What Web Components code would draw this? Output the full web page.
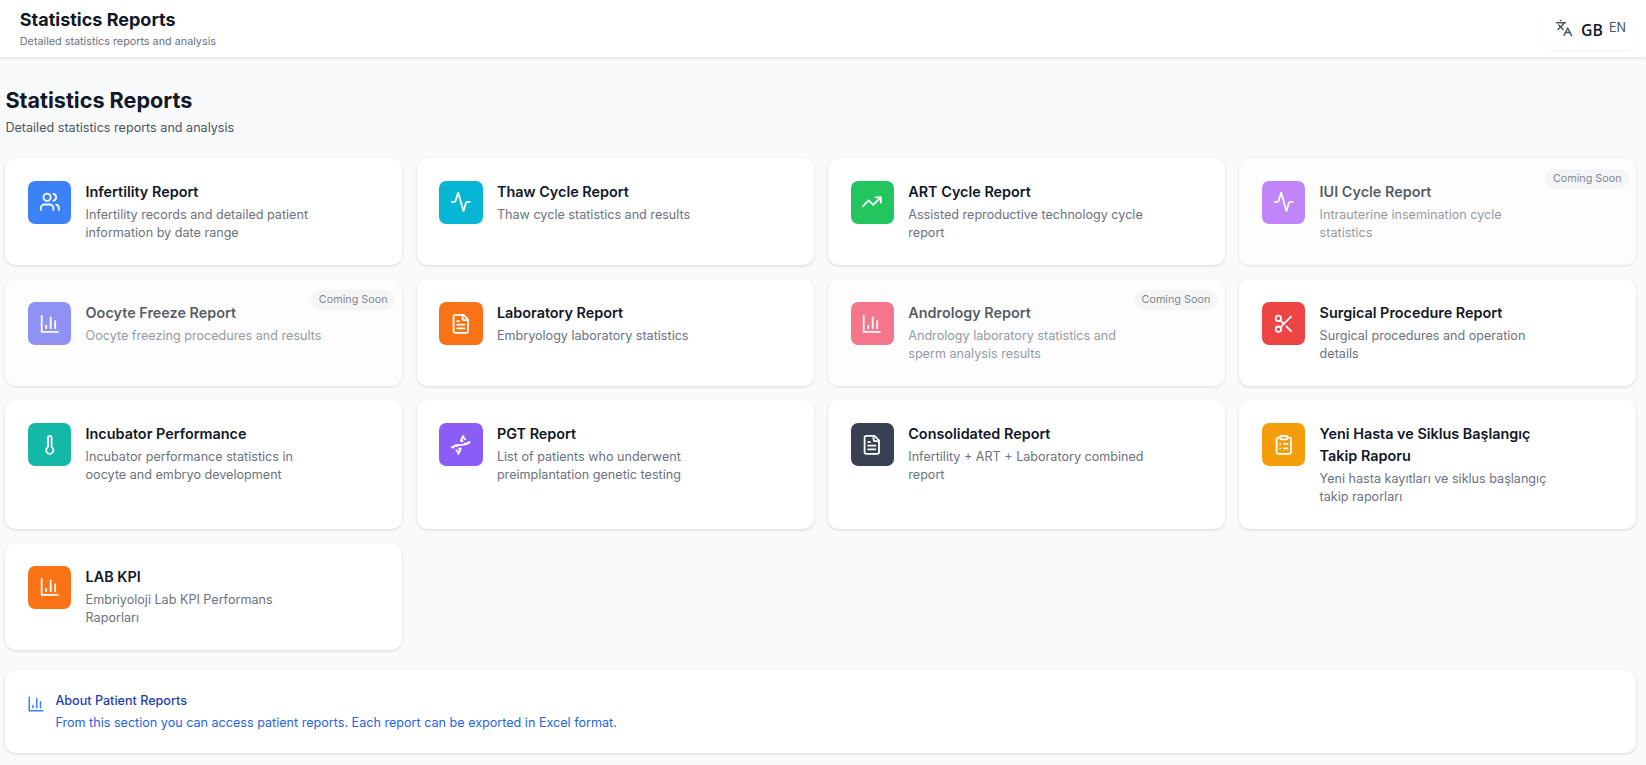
<!DOCTYPE html>
<html lang="en">
<head>
<meta charset="utf-8">
<title>Statistics Reports</title>
<style>
  html, body { margin: 0; padding: 0; background: #f9fafb; }
  body { font-family: Inter, "Noto Sans", sans-serif; color: #111827; }
</style>
</head>
<body>
<app-header>
  <span slot="title">Statistics Reports</span>
  <span slot="subtitle">Detailed statistics reports and analysis</span>
</app-header>
<report-page>
  <span slot="title">Statistics Reports</span>
  <span slot="subtitle">Detailed statistics reports and analysis</span>
  <report-card color="#3b82f6" icon="users"><span slot="title">Infertility Report</span>Infertility records and detailed patient information by date range</report-card>
  <report-card color="#06b6d4" icon="activity"><span slot="title">Thaw Cycle Report</span>Thaw cycle statistics and results</report-card>
  <report-card color="#22c55e" icon="trending"><span slot="title">ART Cycle Report</span>Assisted reproductive technology cycle report</report-card>
  <report-card color="#a855f7" icon="activity" soon><span slot="title">IUI Cycle Report</span>Intrauterine insemination cycle statistics</report-card>
  <report-card color="#6366f1" icon="chart" soon><span slot="title">Oocyte Freeze Report</span>Oocyte freezing procedures and results</report-card>
  <report-card color="#f97316" icon="file"><span slot="title">Laboratory Report</span>Embryology laboratory statistics</report-card>
  <report-card color="#f43f5e" icon="chart" soon><span slot="title">Andrology Report</span>Andrology laboratory statistics and sperm analysis results</report-card>
  <report-card color="#ef4444" icon="scissors"><span slot="title">Surgical Procedure Report</span>Surgical procedures and operation details</report-card>
  <report-card color="#14b8a6" icon="thermometer"><span slot="title">Incubator Performance</span>Incubator performance statistics in oocyte and embryo development</report-card>
  <report-card color="#8b5cf6" icon="dna"><span slot="title">PGT Report</span>List of patients who underwent preimplantation genetic testing</report-card>
  <report-card color="#374151" icon="file"><span slot="title">Consolidated Report</span>Infertility + ART + Laboratory combined report</report-card>
  <report-card color="#f59e0b" icon="clipboard"><span slot="title">Yeni Hasta ve Siklus Başlangıç Takip Raporu</span>Yeni hasta kayıtları ve siklus başlangıç takip raporları</report-card>
  <report-card color="#f97316" icon="chart"><span slot="title">LAB KPI</span>Embriyoloji Lab KPI Performans Raporları</report-card>
  <info-box slot="footer">
    <span slot="title">About Patient Reports</span>
    From this section you can access patient reports. Each report can be exported in Excel format.
  </info-box>
</report-page>

<script>
const ICONS = {
  users: '<path d="M16 21v-2a4 4 0 0 0-4-4H6a4 4 0 0 0-4 4v2"/><circle cx="9" cy="7" r="4"/><path d="M22 21v-2a4 4 0 0 0-3-3.87"/><path d="M16 3.13a4 4 0 0 1 0 7.75"/>',
  activity: '<path d="M22 12h-2.48a2 2 0 0 0-1.93 1.46l-2.35 8.36a.25.25 0 0 1-.48 0L9.24 2.18a.25.25 0 0 0-.48 0l-2.35 8.36A2 2 0 0 1 4.49 12H2"/>',
  trending: '<polyline points="22 7 13.5 15.5 8.5 10.5 2 17"/><polyline points="16 7 22 7 22 13"/>',
  chart: '<path d="M3 3v18h18"/><path d="M18 17V9"/><path d="M13 17V5"/><path d="M8 17v-3"/>',
  file: '<path d="M15 2H6a2 2 0 0 0-2 2v16a2 2 0 0 0 2 2h12a2 2 0 0 0 2-2V7Z"/><path d="M14 2v4a2 2 0 0 0 2 2h4"/><path d="M10 9H8"/><path d="M16 13H8"/><path d="M16 17H8"/>',
  scissors: '<circle cx="6" cy="6" r="3"/><path d="M8.12 8.12 12 12"/><path d="M20 4 8.12 15.88"/><circle cx="6" cy="18" r="3"/><path d="M14.8 14.8 20 20"/>',
  thermometer: '<path d="M14 4v10.54a4 4 0 1 1-4 0V4a2 2 0 0 1 4 0Z"/>',
  dna: '<path d="m10 16 1.5 1.5"/><path d="m14 8-1.5-1.5"/><path d="M15 2c-1.798 1.998-2.518 3.995-2.807 5.993"/><path d="m16.5 10.5 1 1"/><path d="m17 6-2.891-2.891"/><path d="M2 15c6.667-6 13.333 0 20-6"/><path d="m20 9 .891.891"/><path d="M3.109 14.109 4 15"/><path d="m6.5 12.5 1 1"/><path d="m7 18 2.891 2.891"/><path d="M9 22c1.798-1.998 2.518-3.995 2.807-5.993"/>',
  clipboard: '<rect x="8" y="2" width="8" height="4" rx="1"/><path d="M16 4h2a2 2 0 0 1 2 2v14a2 2 0 0 1-2 2H6a2 2 0 0 1-2-2V6a2 2 0 0 1 2-2h2"/><path d="M12 11h4"/><path d="M12 16h4"/><path d="M8 11h.01"/><path d="M8 16h.01"/>',
  languages: '<path d="m5 8 6 6"/><path d="m4 14 6-6 2-3"/><path d="M2 5h12"/><path d="M7 2h1"/><path d="m22 22-5-10-5 10"/><path d="M14 18h6"/>'
}

class UiIcon extends HTMLElement{
    constructor(){
        super()
        this.attachShadow({ mode: "open" })
    }
    connectedCallback(){
        const size = this.getAttribute("size") || "21.6"
        this.shadowRoot.innerHTML = `
          <style>
            :host{ display:inline-flex; width:${size}px; height:${size}px; }
            svg{ width:100%; height:100%; fill:none; stroke:currentColor; stroke-width:2; stroke-linecap:round; stroke-linejoin:round; }
          </style>
          <svg viewBox="0 0 24 24">${ICONS[this.getAttribute("name")] || ""}</svg>
        `
    }
}
customElements.define("ui-icon", UiIcon)

class LangSwitch extends HTMLElement{
    constructor(){
        super()
        this.attachShadow({ mode: "open" })
        this.shadowRoot.innerHTML = `
          <style>
            :host{
                display:flex; align-items:center; box-sizing:border-box;
                width:93px; height:41px; padding:0 11px; gap:8px;
                background:#fff; border-radius:10.8px; box-shadow:0 1px 2px rgba(0,0,0,.05);
            }
            ui-icon{ color:#4b5563; margin-top:-2px; }
            .flag{ font:600 15.8px "Open Sans", sans-serif; color:#111827; margin-top:1px; }
            .code{ font-size:12.6px; line-height:18px; color:#4b5563; margin:-3px 0 0 -2px; }
          </style>
          <ui-icon name="languages" size="18"></ui-icon>
          <span class="flag">GB</span>
          <span class="code">EN</span>
        `
    }
}
customElements.define("lang-switch", LangSwitch)

class AppHeader extends HTMLElement{
    constructor(){
        super()
        this.attachShadow({ mode: "open" })
        this.shadowRoot.innerHTML = `
          <style>
            :host{
                display:flex; align-items:center; justify-content:space-between; box-sizing:border-box;
                height:57px; padding:0 9px 0 19.8px; background:#fff;
                box-shadow:0 1px 3px rgba(0,0,0,.12);
                position:relative;
            }
            h1{ margin:0; font-size:18px; line-height:25.2px; font-weight:700; color:#111827; }
            p{ margin:1px 0 0; font-size:10.8px; line-height:16.2px; color:#6b7280; }
            lang-switch{ margin-top:1px; }
          </style>
          <div>
            <h1><slot name="title"></slot></h1>
            <p><slot name="subtitle"></slot></p>
          </div>
          <lang-switch></lang-switch>
        `
    }
}
customElements.define("app-header", AppHeader)

class ReportCard extends HTMLElement{
    constructor(){
        super()
        this.attachShadow({ mode: "open" })
    }
    connectedCallback(){
        const soon = this.hasAttribute("soon")
        this.shadowRoot.innerHTML = `
          <style>
            :host{
                display:flex; gap:14.4px; box-sizing:border-box; position:relative;
                padding:22.6px 22.6px 23px; background:#fff;
                border-radius:10.8px; box-shadow:0 1px 3px rgba(0,0,0,.14);
                ${soon ? "opacity:.7;" : ""}
            }
            .icon{
                flex:none; width:43.2px; height:43.2px; border-radius:7.2px;
                display:flex; align-items:center; justify-content:center;
                color:#fff; background:${this.getAttribute("color")};
            }
            .body{ max-width:238px; }
            h3{ margin:0; font-size:14.4px; line-height:21.6px; font-weight:600; color:#111827; }
            p{ margin:3.6px 0 0; font-size:12.6px; line-height:18px; color:#6b7280; }
            .badge{
                position:absolute; top:11px; right:7.2px;
                font-size:10.8px; line-height:16.2px; padding:2px 7.6px;
                border-radius:999px; background:#f3f4f6; color:#4b5563;
            }
          </style>
          <div class="icon"><ui-icon name="${this.getAttribute("icon")}"></ui-icon></div>
          <div class="body">
            <h3><slot name="title"></slot></h3>
            <p><slot></slot></p>
          </div>
          ${soon ? '<span class="badge">Coming Soon</span>' : ""}
        `
    }
}
customElements.define("report-card", ReportCard)

class InfoBox extends HTMLElement{
    constructor(){
        super()
        this.attachShadow({ mode: "open" })
        this.shadowRoot.innerHTML = `
          <style>
            :host{
                display:flex; gap:10px; box-sizing:border-box; height:83px;
                padding:22px; background:#fff;
                border-radius:10.8px; box-shadow:0 1px 3px rgba(0,0,0,.14);
            }
            ui-icon{ color:#3b82f6; margin-top:2.6px; flex:none; }
            h4{ margin:0; font-size:12.6px; line-height:18px; font-weight:500; color:#1e40af; }
            p{ margin:4.4px 0 0; font-size:12.6px; line-height:18px; color:#2563eb; }
          </style>
          <ui-icon name="chart" size="18"></ui-icon>
          <div>
            <h4><slot name="title"></slot></h4>
            <p><slot></slot></p>
          </div>
        `
    }
}
customElements.define("info-box", InfoBox)

class ReportPage extends HTMLElement{
    constructor(){
        super()
        this.attachShadow({ mode: "open" })
        this.shadowRoot.innerHTML = `
          <style>
            :host{ display:block; padding:28.8px 9.6px 12px 5.4px; }
            h2{ margin:0; font-size:21.6px; line-height:28.8px; font-weight:700; color:#111827; }
            .sub{ margin:4.4px 0 21px; font-size:12.6px; line-height:18px; color:#4b5563; }
            .grid{ display:grid; grid-template-columns:repeat(4, minmax(0, 1fr)); gap:14.4px; margin-bottom:20.2px; }
          </style>
          <h2><slot name="title"></slot></h2>
          <p class="sub"><slot name="subtitle"></slot></p>
          <div class="grid"><slot></slot></div>
          <slot name="footer"></slot>
        `
    }
}
customElements.define("report-page", ReportPage)
</script>
</body>
</html>
